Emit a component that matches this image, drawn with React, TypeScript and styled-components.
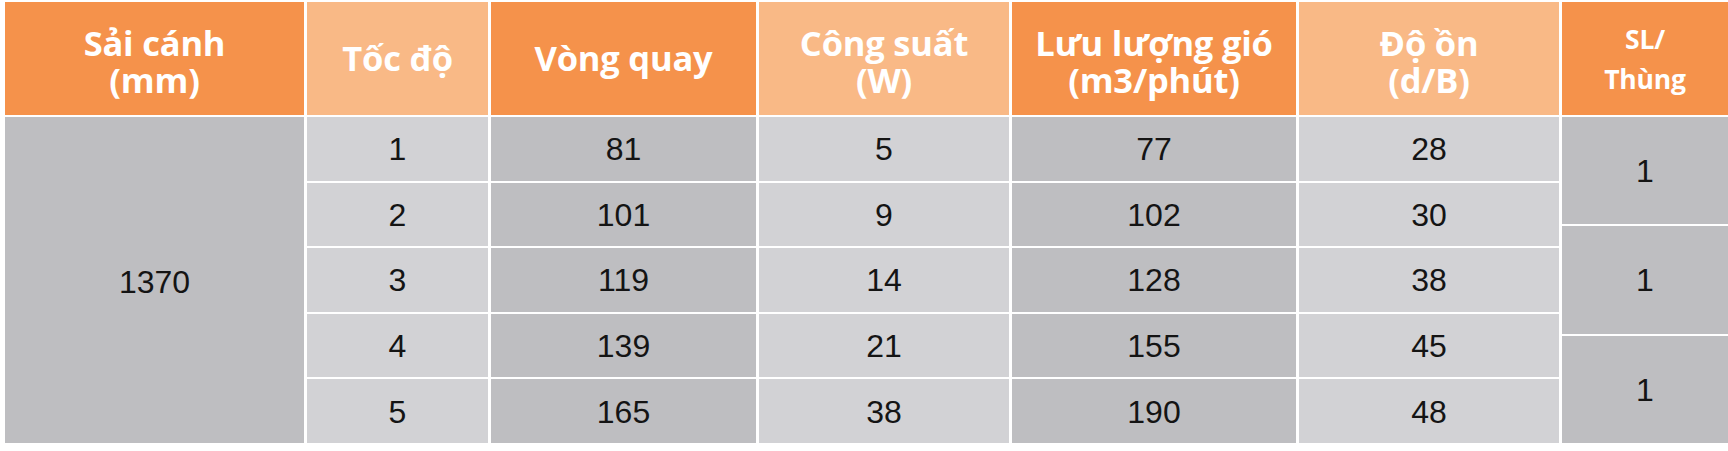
import styled, { createGlobalStyle } from "styled-components";

const GlobalStyle = createGlobalStyle`
  html, body {
    margin: 0;
    padding: 0;
    background: #ffffff;
  }
  body {
    width: 1728px;
    height: 451px;
    overflow: hidden;
  }
`;

const DARK_ORANGE = "#f5924b";
const LIGHT_ORANGE = "#f9b986";
const DARK_GRAY = "#bebec1";
const LIGHT_GRAY = "#d2d2d5";

const Page = styled.div`
  padding: 2px 0 0 5px;
  background: #ffffff;
`;

const Table = styled.div`
  display: grid;
  grid-template-columns: 299px 181px 265px 250px 284px 260px 166px;
  grid-template-rows: 113px repeat(5, 63.6px);
  column-gap: 3px;
  row-gap: 2px;
  background: #ffffff;
`;

const HeadCell = styled.div<{ $light?: boolean; $small?: boolean; $single?: boolean }>`
  display: flex;
  align-items: center;
  justify-content: center;
  text-align: center;
  padding-top: ${(p) => (p.$single ? "0" : p.$small ? "1px" : "5px")};
  padding-bottom: ${(p) => (p.$single ? "2px" : "0")};
  box-sizing: border-box;
  background: ${(p) => (p.$light ? LIGHT_ORANGE : DARK_ORANGE)};
  color: #ffffff;
  font-family: "Open Sans", "Noto Sans", sans-serif;
  font-weight: 700;
  font-size: ${(p) => (p.$small ? "26.5px" : "34.5px")};
  line-height: ${(p) => (p.$small ? "40px" : "37px")};
  letter-spacing: -0.2px;
`;

const Cell = styled.div<{ $light?: boolean }>`
  display: flex;
  align-items: center;
  justify-content: center;
  padding-top: 2px;
  box-sizing: border-box;
  background: ${(p) => (p.$light ? LIGHT_GRAY : DARK_GRAY)};
  color: #141414;
  font-family: "Liberation Sans", Arial, sans-serif;
  font-size: 32px;
`;

const SpanCell = styled(Cell)`
  grid-column: 1;
  grid-row: 2 / span 5;
  padding-top: 6px;
`;

const PackColumn = styled.div`
  grid-column: 7;
  grid-row: 2 / span 5;
  display: flex;
  flex-direction: column;
  gap: 2px;
`;

const PackCell = styled(Cell)`
  flex: 1;
`;

const headers: { label: string[]; light?: boolean; small?: boolean }[] = [
  { label: ["Sải cánh", "(mm)"] },
  { label: ["Tốc độ"], light: true },
  { label: ["Vòng quay"] },
  { label: ["Công suất", "(W)"], light: true },
  { label: ["Lưu lượng gió", "(m3/phút)"] },
  { label: ["Độ ồn", "(d/B)"], light: true },
  { label: ["SL/", "Thùng"], small: true },
];

const rows = [
  { speed: 1, rpm: 81, power: 5, flow: 77, noise: 28 },
  { speed: 2, rpm: 101, power: 9, flow: 102, noise: 30 },
  { speed: 3, rpm: 119, power: 14, flow: 128, noise: 38 },
  { speed: 4, rpm: 139, power: 21, flow: 155, noise: 45 },
  { speed: 5, rpm: 165, power: 38, flow: 190, noise: 48 },
];

export default function App() {
  return (
    <>
      <GlobalStyle />
      <Page>
        <Table>
          {headers.map((h) => (
            <HeadCell
              key={h.label.join()}
              $light={h.light}
              $small={h.small}
              $single={h.label.length === 1}
            >
              <div>
                {h.label.map((line, i) => (
                  <div key={i}>{line}</div>
                ))}
              </div>
            </HeadCell>
          ))}

          <SpanCell>1370</SpanCell>

          {rows.map((r, i) => (
            <Row key={r.speed} index={i} {...r} />
          ))}

          <PackColumn>
            <PackCell>1</PackCell>
            <PackCell>1</PackCell>
            <PackCell>1</PackCell>
          </PackColumn>
        </Table>
      </Page>
    </>
  );
}

function Row({
  index,
  speed,
  rpm,
  power,
  flow,
  noise,
}: {
  index: number;
  speed: number;
  rpm: number;
  power: number;
  flow: number;
  noise: number;
}) {
  const gridRow = index + 2;
  return (
    <>
      <Cell $light style={{ gridRow, gridColumn: 2 }}>{speed}</Cell>
      <Cell style={{ gridRow, gridColumn: 3 }}>{rpm}</Cell>
      <Cell $light style={{ gridRow, gridColumn: 4 }}>{power}</Cell>
      <Cell style={{ gridRow, gridColumn: 5 }}>{flow}</Cell>
      <Cell $light style={{ gridRow, gridColumn: 6 }}>{noise}</Cell>
    </>
  );
}
